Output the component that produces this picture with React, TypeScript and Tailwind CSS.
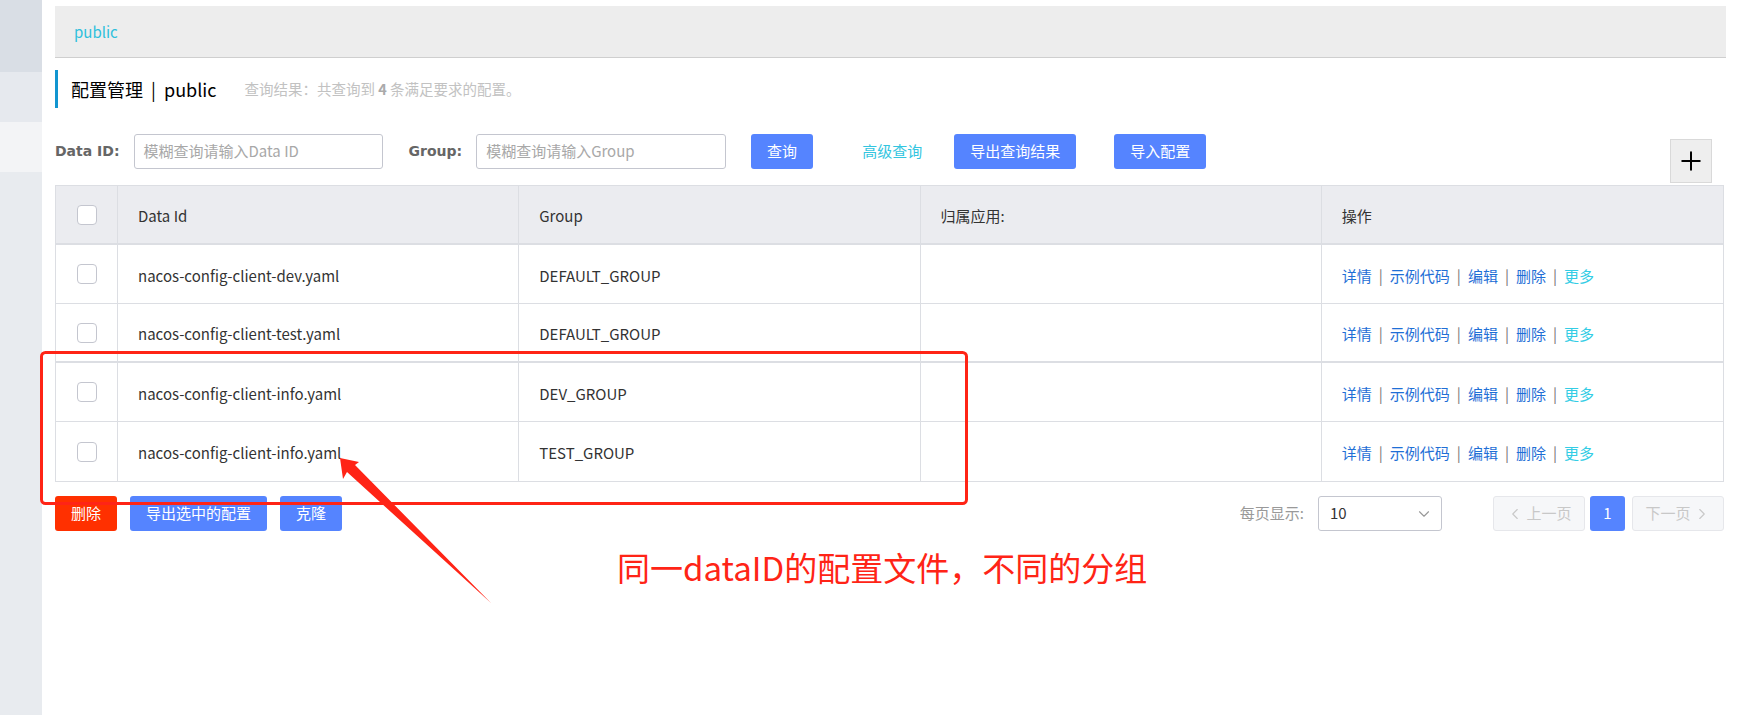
import { ChevronDown, ChevronLeft, ChevronRight, Plus } from "lucide-react";

const rows = [
  { id: "nacos-config-client-dev.yaml", group: "DEFAULT_GROUP", thick: false },
  { id: "nacos-config-client-test.yaml", group: "DEFAULT_GROUP", thick: true },
  { id: "nacos-config-client-info.yaml", group: "DEV_GROUP", thick: false },
  { id: "nacos-config-client-info.yaml", group: "TEST_GROUP", thick: false },
];

function Checkbox() {
  return <div className="w-5 h-5 rounded-[4px] border border-[#c4c6cf] bg-white" />;
}

function Actions() {
  const sep = <span className="text-[#777] px-[7px]">|</span>;
  return (
    <div className="flex items-center text-[15px] text-[#1f6fd6]">
      <span>详情</span>
      {sep}
      <span>示例代码</span>
      {sep}
      <span>编辑</span>
      {sep}
      <span>删除</span>
      {sep}
      <span className="text-[#33cde5]">更多</span>
    </div>
  );
}

function Annotation() {
  return (
    <>
      <svg className="absolute inset-0 pointer-events-none" width="1737" height="715">
        {/* red frame */}
        <rect x="41.5" y="352.5" width="925" height="151" rx="4" fill="none" stroke="#ff2416" strokeWidth="3" />
        {/* arrow */}
        <polygon points="340,458 343,479 347,472 491,603 355,465 359,462" fill="#ff2416" />
      </svg>
      <div className="absolute left-[617px] top-[546px] text-[33px] leading-[42px] text-[#ff2416] whitespace-nowrap">
        同一dataID的配置文件，不同的分组
      </div>
    </>
  );
}

export default function App() {
  return (
    <div
      className="relative flex w-[1737px] h-[715px] bg-white text-[#333] overflow-hidden"
      style={{ fontFamily: '"Noto Sans CJK SC", "Liberation Sans", sans-serif' }}
    >
      {/* sidebar */}
      <aside className="w-[42px] flex flex-col shrink-0">
        <div className="h-[72px] bg-[#d9dee5]" />
        <div className="h-[50px] bg-[#e6e9ee]" />
        <div className="h-[50px] bg-[#f3f4f6]" />
        <div className="flex-1 bg-[#e8ebef]" />
      </aside>

      <main className="flex-1 pl-[13px] pr-[13px] pt-[6px] flex flex-col">
        {/* namespace bar */}
        <div className="h-[52px] bg-[#ededed] border-b border-[#cfcfcf] flex items-center pl-[19px] mr-[-2px]">
          <span className="text-[15px] text-[#2fc0dc] leading-none">public</span>
        </div>

        {/* title */}
        <div className="mt-[12px] h-[38px] border-l-[3px] border-[#1295d0] pl-[13px] flex items-center">
          <span className="text-[18px] text-black">配置管理&nbsp;&nbsp;|&nbsp;&nbsp;public</span>
          <span className="ml-[28px] text-[14.5px] text-[#c2c2c2]">
            查询结果：共查询到 <b className="text-[#aaa]">4</b> 条满足要求的配置。
          </span>
        </div>

        {/* search row */}
        <div className="mt-[26px] h-[49px] flex items-start">
          <div className="h-[35px] flex items-center">
            <span className="text-[14px] font-bold text-[#666]" style={{ fontFamily: '"DejaVu Sans", sans-serif' }}>
              Data ID:
            </span>
            <div className="ml-[14px] w-[249px] h-[35px] border border-[#c4c6cf] rounded-[3px] flex items-center px-[9px] text-[15px] text-[#a8a8a8]">
              模糊查询请输入Data ID
            </div>
            <span className="ml-[26px] text-[14px] font-bold text-[#666]" style={{ fontFamily: '"DejaVu Sans", sans-serif' }}>
              Group:
            </span>
            <div className="ml-[14px] w-[250px] h-[35px] border border-[#c4c6cf] rounded-[3px] flex items-center px-[9px] text-[15px] text-[#a8a8a8]">
              模糊查询请输入Group
            </div>
            <button className="ml-[25px] w-[62px] h-[35px] rounded-[3px] bg-[#5584ff] text-white text-[15px]">查询</button>
            <span className="ml-[49px] text-[15px] text-[#33c5e0]">高级查询</span>
            <button className="ml-[32px] w-[122px] h-[35px] rounded-[3px] bg-[#5584ff] text-white text-[15px]">导出查询结果</button>
            <button className="ml-[38px] w-[92px] h-[35px] rounded-[3px] bg-[#5584ff] text-white text-[15px]">导入配置</button>
          </div>
          <div className="ml-auto mr-[12px] mt-[5px] w-[42px] h-[44px] bg-[#eeeeee] border border-[#d9d9d9] flex items-center justify-center">
            <Plus className="w-[30px] h-[30px] text-black" strokeWidth={1.6} />
          </div>
        </div>

        {/* table */}
        <div className="mt-[2px] border border-[#dcdee3] text-[15px]">
          <div className="grid grid-cols-[62px_1fr_1fr_1fr_1fr] h-[59px] bg-[#ebecf0] border-b-2 border-[#dcdee3]">
            <div className="flex items-center justify-center border-r border-[#dcdee3]">
              <Checkbox />
            </div>
            <div className="flex items-center pl-[20px] pt-[4px] border-r border-[#dcdee3]">Data Id</div>
            <div className="flex items-center pl-[20px] pt-[4px] border-r border-[#dcdee3]">Group</div>
            <div className="flex items-center pl-[20px] pt-[4px] border-r border-[#dcdee3]">归属应用:</div>
            <div className="flex items-center pl-[20px] pt-[4px]">操作</div>
          </div>
          {rows.map((r, i) => (
            <div
              key={i}
              className={
                "grid grid-cols-[62px_1fr_1fr_1fr_1fr] h-[59px] border-[#dcdee3] " +
                (i === rows.length - 1 ? "" : r.thick ? "border-b-2" : "border-b")
              }
            >
              <div className="flex items-center justify-center border-r border-[#dcdee3]">
                <Checkbox />
              </div>
              <div className="flex items-center pl-[20px] pt-[4px] border-r border-[#dcdee3]">{r.id}</div>
              <div className="flex items-center pl-[20px] pt-[4px] border-r border-[#dcdee3]">{r.group}</div>
              <div className="border-r border-[#dcdee3]" />
              <div className="flex items-center pl-[20px] pt-[4px]">
                <Actions />
              </div>
            </div>
          ))}
        </div>

        {/* footer row */}
        <div className="mt-[14px] h-[35px] flex items-center">
          <button className="w-[62px] h-[35px] rounded-[3px] bg-[#ff3000] text-white text-[15px]">删除</button>
          <button className="ml-[13px] w-[137px] h-[35px] rounded-[3px] bg-[#5584ff] text-white text-[15px]">导出选中的配置</button>
          <button className="ml-[13px] w-[62px] h-[35px] rounded-[3px] bg-[#5584ff] text-white text-[15px]">克隆</button>

          <div className="ml-auto flex items-center">
            <span className="text-[15px] text-[#999]">每页显示:</span>
            <div className="ml-[14px] w-[124px] h-[35px] border border-[#c4c6cf] rounded-[3px] flex items-center pl-[11px] pr-[8px] text-[15px] text-[#333]">
              <span>10</span>
              <ChevronDown className="ml-auto w-[18px] h-[18px] text-[#999]" strokeWidth={1.5} />
            </div>
            <div className="ml-[51px] w-[92px] h-[35px] rounded-[3px] border border-[#e6e7eb] bg-[#f6f7f9] flex items-center justify-center text-[15px] text-[#c8c8c8]">
              <ChevronLeft className="w-[18px] h-[18px] mr-[2px]" strokeWidth={1.5} />
              上一页
            </div>
            <div className="ml-[5px] w-[35px] h-[35px] rounded-[3px] bg-[#5584ff] flex items-center justify-center text-[15px] text-white">
              1
            </div>
            <div className="ml-[7px] w-[92px] h-[35px] rounded-[3px] border border-[#e6e7eb] bg-[#f6f7f9] flex items-center justify-center text-[15px] text-[#c8c8c8]">
              下一页
              <ChevronRight className="w-[18px] h-[18px] ml-[2px]" strokeWidth={1.5} />
            </div>
          </div>
        </div>
      </main>

      <Annotation />
    </div>
  );
}
